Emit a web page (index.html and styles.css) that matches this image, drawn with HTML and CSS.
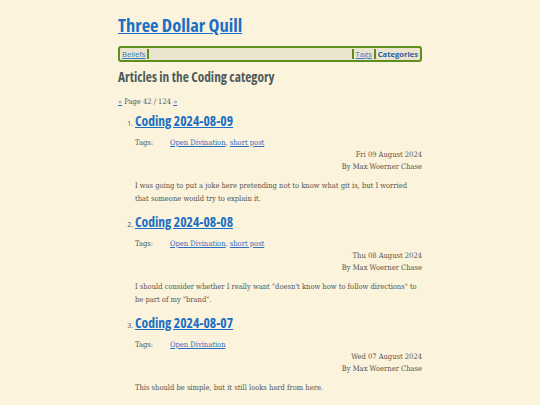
FILE: index.html
```html
<!DOCTYPE html>
<html>
<head>
<meta charset="utf-8">
<link rel="stylesheet" href="styles.css">
</head>
<body>
<div class="page">
  <header class="site-header">
    <h1 class="site-title"><a href="#">Three Dollar Quill</a></h1>
    <nav class="nav">
      <a class="nav-link" href="#">Beliefs</a>
      <span class="nav-fill"></span>
      <a class="nav-link" href="#">Tags</a>
      <span class="nav-sep"></span>
      <a class="nav-link current" href="#">Categories</a>
    </nav>
  </header>
  <main>
    <h2 class="cat-title">Articles in the Coding category</h2>
    <p class="pager"><a href="#">«</a> Page 42 / 124 <a href="#">»</a></p>
    <ol class="articles">
      <li class="article">
        <h3 class="article-title"><a href="#">Coding 2024-08-09</a></h3>
        <div class="tags"><span class="tags-label">Tags:</span><span><a href="#">Open Divination</a>, <a href="#">short post</a></span></div>
        <div class="meta"><div>Fri 09 August 2024</div><div>By Max Woerner Chase</div></div>
        <p class="summary">I was going to put a joke here pretending not to know what git is, but I worried that someone would try to explain it.</p>
      </li>
      <li class="article">
        <h3 class="article-title"><a href="#">Coding 2024-08-08</a></h3>
        <div class="tags"><span class="tags-label">Tags:</span><span><a href="#">Open Divination</a>, <a href="#">short post</a></span></div>
        <div class="meta"><div>Thu 08 August 2024</div><div>By Max Woerner Chase</div></div>
        <p class="summary">I should consider whether I really want "doesn't know how to follow directions" to be part of my "brand".</p>
      </li>
      <li class="article">
        <h3 class="article-title"><a href="#">Coding 2024-08-07</a></h3>
        <div class="tags"><span class="tags-label">Tags:</span><span><a href="#">Open Divination</a></span></div>
        <div class="meta"><div>Wed 07 August 2024</div><div>By Max Woerner Chase</div></div>
        <p class="summary">This should be simple, but it still looks hard from here.</p>
      </li>
    </ol>
  </main>
</div>
</body>
</html>
```
FILE: styles.css
```css
html, body {
  margin: 0;
  padding: 0;
  background: #fbf3dc;
}
body {
  font-family: "DejaVu Serif", serif;
  font-stretch: condensed;
  font-size: 7.5px;
  color: #555550;
}
.page {
  width: 304px;
  margin: 0 auto;
  padding-top: 13px;
}
a { color: #2a6fc0; }
.site-title {
  font-family: "Open Sans", sans-serif;
  font-stretch: condensed;
  font-size: 18.5px;
  font-weight: 700;
  margin: 0 0 9px;
  line-height: 24px;
}
.site-title a { color: #1a6fc4; }
.nav {
  display: flex;
  align-items: center;
  border: 2px solid #5e8f1e;
  border-radius: 3px;
  background: #ebe4cf;
  height: 12px;
  padding: 0 2px;
  font-family: "Open Sans", sans-serif;
  font-stretch: normal;
  font-size: 7.6px;
}
.nav-link { color: #3a7ac8; }
.nav-link.current { font-weight: 700; color: #1f5fa8; text-decoration: none; }
.nav-fill {
  flex: 1;
  align-self: stretch;
  margin: 1px 2px;
  border-left: 2px solid #5e8f1e;
  border-right: 2px solid #5e8f1e;
}
.nav-sep {
  width: 2px;
  height: 10px;
  background: #5e8f1e;
  margin: 0 2px;
}
.cat-title {
  font-family: "Open Sans", sans-serif;
  font-stretch: condensed;
  font-size: 13.4px;
  font-weight: 700;
  color: #4f5b5b;
  margin: 7px 0 0;
  line-height: 16px;
}
.pager {
  margin: 12px 0 0;
  line-height: 10px;
}
.articles {
  margin: 0;
  padding-left: 17px;
}
.article { margin: 0; padding: 0 0 3px; }
.article::marker { font-family: "Open Sans", sans-serif; font-stretch: normal; font-size: 7px; }
.article-title {
  font-family: "Open Sans", sans-serif;
  font-stretch: condensed;
  font-size: 13.6px;
  font-weight: 700;
  margin: 3px 0 0;
  line-height: 22px;
}
.article-title a { color: #1a6fc4; }
.tags {
  display: flex;
  margin-top: 5px;
  line-height: 12px;
}
.tags-label { width: 35px; }
.meta {
  text-align: right;
  line-height: 12px;
}
.summary {
  margin: 6px 0 0;
  line-height: 13px;
}
```
